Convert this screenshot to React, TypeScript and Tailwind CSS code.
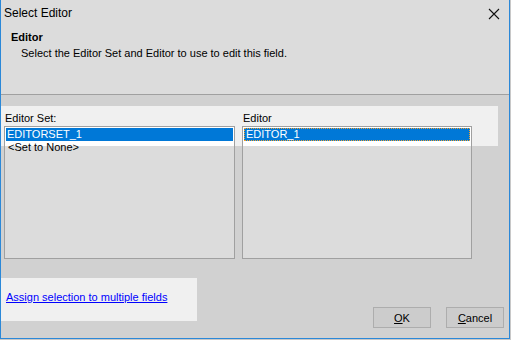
import React from "react";

const font = { fontFamily: '"Liberation Sans", Arial, sans-serif' };

function CloseIcon() {
  return (
    <svg width="12" height="12" viewBox="0 0 12 12" className="block">
      <path d="M1 1 L11 11 M11 1 L1 11" stroke="#111" strokeWidth="1.1" fill="none" />
    </svg>
  );
}

export default function App() {
  return (
    <div className="w-[511px] h-[340px] bg-[#c8c8c8] text-[11px] text-black" style={font}>
      <div className="w-[510px] h-[339px] bg-[#d1d1d1] border-l border-r border-b border-[#2b88d8] flex flex-col overflow-hidden">
        {/* title + header */}
        <div className="bg-[#dcdcdc] h-[94px] border-b border-[#a0a0a0] box-content">
          <div className="flex items-start pt-[5px] pl-[3px] h-[29px]">
            <span className="leading-[16px] text-[12px]">Select Editor</span>
            <div className="ml-auto mr-[9px] mt-[3px]">
              <CloseIcon />
            </div>
          </div>
          <div className="pl-[10px] leading-[16px] font-bold">Editor</div>
          <div className="pl-[20px] leading-[16px]">Select the Editor Set and Editor to use to edit this field.</div>
        </div>

        {/* body */}
        <div className="relative flex-1 flex flex-col">
          <div className="absolute top-[11px] left-0 w-[497px] h-[40px] bg-[#f0f0f0]" />
          <div className="relative flex pt-[16px] pl-[3px] gap-[7px]">
            <div className="w-[231px] flex flex-col">
              <div className="leading-[15px] pl-[1px]">Editor Set:</div>
              <div className="h-[133px] border border-[#a0a0a0] bg-[linear-gradient(to_bottom,#ffffff_19px,#dcdcdc_19px)] p-[1px]">
                <div className="h-[13px] leading-[13px] bg-[#0078d7] text-white pl-[1px]">EDITORSET_1</div>
                <div className="h-[13px] leading-[13px] pl-[2px]">&lt;Set to None&gt;</div>
              </div>
            </div>
            <div className="w-[230px] flex flex-col">
              <div className="leading-[15px] pl-[1px]">Editor</div>
              <div className="h-[133px] border border-[#a0a0a0] bg-[linear-gradient(to_bottom,#ffffff_19px,#dcdcdc_19px)] p-[1px]">
                <div className="h-[13px] leading-[11px] bg-[#0078d7] text-white pl-[1px] border border-dotted border-[#f0a030]">EDITOR_1</div>
              </div>
            </div>
          </div>

          <div className="flex items-start mt-[19px]">
            <div className="w-[196px] h-[43px] bg-[#f0f0f0] pt-[11px] pl-[5px]">
              <a className="leading-[16px] text-[#0000ff] underline cursor-pointer">Assign selection to multiple fields</a>
            </div>
            <div className="ml-auto mr-[5px] mt-[29px] flex gap-[15px]">
              <button className="w-[58px] h-[21px] border border-[#adadad] bg-[#cccccc] leading-[16px]">
                <span className="underline">O</span>K
              </button>
              <button className="w-[58px] h-[21px] border border-[#adadad] bg-[#cccccc] leading-[16px]">
                <span className="underline">C</span>ancel
              </button>
            </div>
          </div>
        </div>
      </div>
    </div>
  );
}
